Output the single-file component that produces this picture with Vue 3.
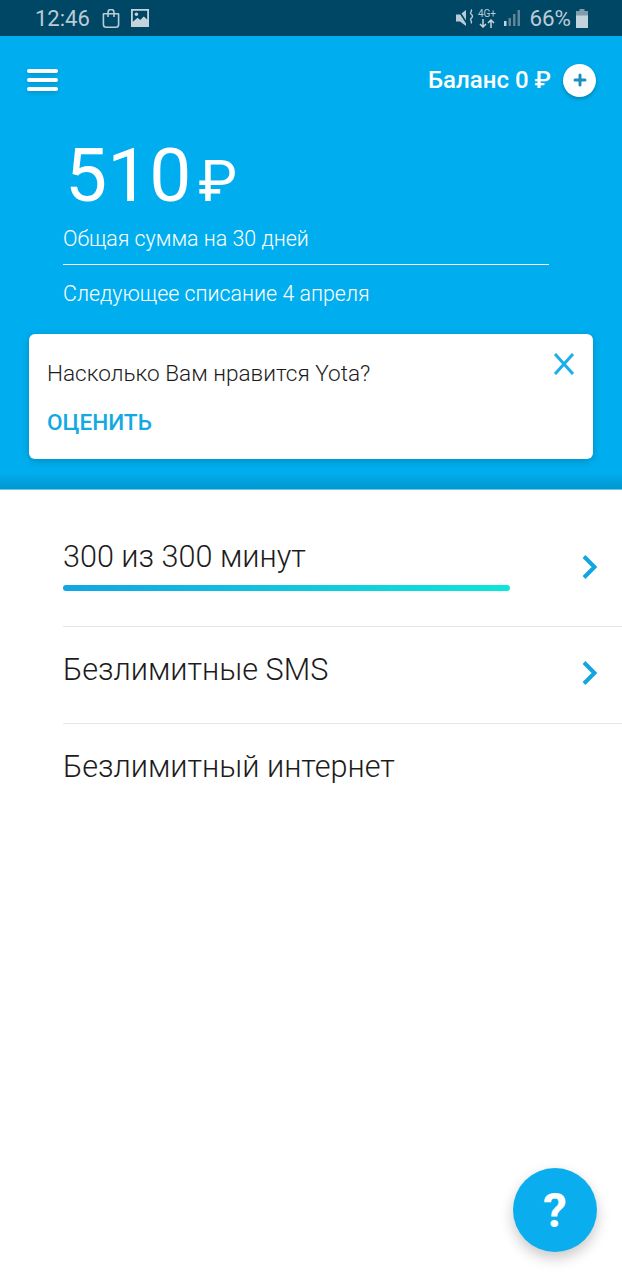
<script setup>
const rows = [
  { label: '300 из 300 минут', progress: true, arrow: true },
  { label: 'Безлимитные SMS', arrow: true },
  { label: 'Безлимитный интернет' }
]
</script>

<template>
  <div class="screen">
    <div class="status">
      <span class="time">12:46</span>
      <svg class="st-icon bag" width="18" height="19" viewBox="0 0 18 19" fill="none" stroke="#b9ccd6" stroke-width="1.600"><path d="M1.800 4.800h14.400a.4.4 0 0 1 .4.4v10.200a2.800 2.800 0 0 1-2.800 2.800H4.200a2.800 2.800 0 0 1-2.800-2.800V5.200z"/><path d="M6 8V3.400a3 3 0 0 1 6 0V8"/></svg>
      <svg class="st-icon pic" width="18" height="18" viewBox="0 0 18 18"><path fill="#c4d4dc" d="M0 0h18v18H0z"/><path fill="#004766" d="M1.800 1.800h14.400v8.800l-3.400-3.200-3.600 3.600-2.600-2.200-4.800 4z"/><circle cx="5.400" cy="5.200" r="1.700" fill="#c4d4dc"/></svg>
      <span class="st-spacer"></span>
      <svg class="mute" width="20" height="20" viewBox="0 0 20 20"><path fill="#b9ccd6" d="M0 6.500h4L10 2v16l-6-4.500H0z"/><path stroke="#004766" stroke-width="1.600" d="M1 0l11 17" fill="none"/><path stroke="#b9ccd6" stroke-width="1.400" fill="none" d="M15 1.500c2.200 1.800-2 3 0 4.500s2 3 0 4.500 2.200 3 0 5"/></svg>
      <span class="net">
        <span class="net-top">4G+</span>
        <svg width="16" height="9" viewBox="0 0 16 9"><path d="M4 0v8M1 5l3 3 3-3M12 9V1M9 4l3-3 3 3" stroke="#c4d4dc" stroke-width="1.500" fill="none"/></svg>
      </span>
      <svg class="signal" width="16" height="18" viewBox="0 0 16 18"><path fill="#c4d4dc" d="M0 12h2.500v5H0z"/><path fill="#5f8699" d="M4.500 9H7v8H4.500zM9 5h2.500v12H9zM13.500 1H16v16h-2.500z"/></svg>
      <span class="pct">66%</span>
      <svg width="12" height="19" viewBox="0 0 12 19"><path fill="#7f9dad" d="M3.500 0h5v2H12v5H0V2h3.500z"/><path fill="#c4d4dc" d="M0 6.500h12V19H0z"/></svg>
    </div>

    <header class="hero">
      <div class="topbar">
        <div class="burger"><i></i><i></i><i></i></div>
        <div class="balance">
          <span>Баланс 0 ₽</span>
          <span class="plus">
            <svg width="14" height="14" viewBox="0 0 14 14"><path d="M7 2v10M2 7h10" stroke="#1a8fc4" stroke-width="3" stroke-linecap="round"/></svg>
          </span>
        </div>
      </div>
      <div class="sum">
        <div class="amount"><span class="num">510</span><span class="rub">₽</span></div>
        <div class="sum-label">Общая сумма на 30 дней</div>
        <div class="sum-next">Следующее списание 4 апреля</div>
      </div>
      <div class="card">
        <div class="card-q">Насколько Вам нравится Yota?</div>
        <div class="card-btn">ОЦЕНИТЬ</div>
        <svg class="close" width="22" height="24" viewBox="0 0 22 24"><path d="M2 2l18 20M20 2L2 22" stroke="#1aaeea" stroke-width="3" fill="none"/></svg>
      </div>
    </header>

    <ul class="rows">
      <li v-for="r in rows" :key="r.label" class="row" :class="{ tall: r.progress }">
        <div class="row-main">
          <div class="row-label">{{ r.label }}</div>
          <div v-if="r.progress" class="bar"></div>
        </div>
        <svg v-if="r.arrow" class="chev" width="16" height="24" viewBox="0 0 16 24"><path d="M2 1.500l10.500 10.500-10.500 10.500" stroke="#12a5e2" stroke-width="4" fill="none"/></svg>
      </li>
    </ul>

    <button class="fab">?</button>
  </div>
</template>

<style>
html, body { margin: 0; background: #fff; }
</style>

<style scoped>
.screen {
  position: relative;
  width: 622px;
  height: 1280px;
  overflow: hidden;
  background: #fff;
  font-family: Roboto, "Liberation Sans", sans-serif;
}
.status {
  height: 36px;
  box-sizing: border-box;
  background: #004766;
  display: flex;
  align-items: center;
  padding: 0 34px 0 35px;
  color: #b9ccd6;
}
.time { font-size: 22px; font-weight: 400; margin-right: 12px; }
.st-icon { margin-right: 11px; }
.st-spacer { flex: 1; }
.net { display: flex; flex-direction: column; align-items: center; margin: 0 9px 0 2px; line-height: 1; width: 17px; }
.net-top { font-size: 10px; line-height: 11px; }
.signal { margin-right: 9px; }
.pct { font-size: 22.400px; margin-right: 5px; }

.hero {
  height: 454px;
  box-sizing: border-box;
  background: linear-gradient(#00aeef 0, #00aeef 436px, #0098d0 100%);
  border-bottom: 1px solid #6cc6ea;
  padding-top: 27px;
  position: relative;
}
.topbar {
  display: flex;
  justify-content: space-between;
  align-items: center;
  padding: 0 26px 0 27px;
  height: 34px;
}
.burger { display: flex; flex-direction: column; gap: 5px; filter: drop-shadow(0 2px 2px rgba(0,0,0,.15)); }
.burger i { display: block; width: 31px; height: 4px; border-radius: 2px; background: #fff; }
.balance { display: flex; align-items: center; gap: 12px; color: #fff; font-size: 24px; font-weight: 500; }
.plus {
  width: 33px; height: 33px; border-radius: 50%; background: #fff;
  display: flex; align-items: center; justify-content: center;
  box-shadow: 0 2px 4px rgba(0,0,0,.25);
}
.sum { padding: 0 73px 0 63px; color: #fff; margin-top: 39px; }
.amount { display: flex; align-items: baseline; height: 78px; }
.num { font-size: 75px; font-weight: 400; line-height: 78px; margin-left: 2px; }
.rub { font-size: 58px; margin-left: 7px; }
.sum-label {
  font-size: 21.400px; font-weight: 300; line-height: 26px; margin-top: 12px;
  padding-bottom: 12px; border-bottom: 1px solid #fff;
}
.sum-next { font-size: 21.400px; font-weight: 300; line-height: 26px; margin-top: 16px; }
.card {
  position: relative;
  margin: 27px 29px 0;
  height: 125px;
  box-sizing: border-box;
  background: #fff;
  border-radius: 6px;
  padding: 25px 18px 0;
  box-shadow: 0 2px 8px rgba(0,0,0,.2);
}
.card-q { font-size: 22.600px; font-weight: 300; line-height: 30px; color: #1c1c1c; }
.card-btn { font-size: 22.600px; font-weight: 500; line-height: 30px; color: #14a9e3; margin-top: 19px; }
.close { position: absolute; right: 18px; top: 18px; }

.rows { list-style: none; margin: 0; padding: 30px 0 0 63px; }
.row { display: flex; align-items: flex-start; justify-content: space-between; height: 97px; border-bottom: 1px solid #e6e6e6; box-sizing: border-box; padding: 24px 24px 0 0; }
.row.tall { height: 107px; padding-top: 18px; }
.row:last-child { border-bottom: none; }
.row-main { flex: 1; }
.row-label { font-size: 30.600px; font-weight: 300; line-height: 38px; color: #1c1c1c; }
.bar { width: 447px; height: 6px; margin-top: 9px; border-radius: 3px; background: linear-gradient(90deg, #12a5e6, #0ee6d8); }
.chev { margin-top: 10px; }
.tall .chev { margin-top: 17px; }
.fab {
  position: absolute;
  left: 513px; top: 1168px;
  width: 84px; height: 84px;
  border: none; border-radius: 50%;
  background: #0aaeee;
  color: #fff;
  font: 700 48px Roboto, sans-serif;
  box-shadow: 0 6px 14px rgba(0,0,0,.22);
  padding: 0;
}
</style>
